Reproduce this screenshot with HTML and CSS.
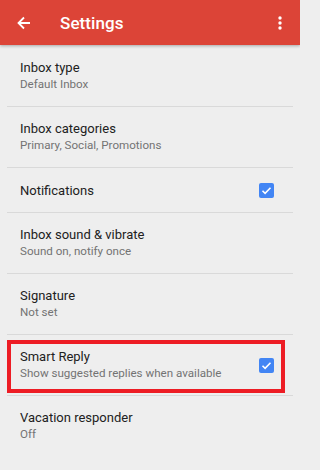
FILE: index.html
```html
<!DOCTYPE html>
<html>
<head>
<meta charset="utf-8">
<link rel="stylesheet" href="styles.css">
</head>
<body>
<header class="appbar">
  <svg class="back" width="16" height="16" viewBox="0 0 16 16"><path d="M14 8H3M8 2.5L2.5 8 8 13.5" fill="none" stroke="#fff" stroke-width="1.8"/></svg>
  <div class="title">Settings</div>
  <svg class="more" width="6" height="16" viewBox="0 0 6 16"><circle cx="3" cy="3" r="1.7" fill="#fff"/><circle cx="3" cy="8" r="1.7" fill="#fff"/><circle cx="3" cy="13" r="1.7" fill="#fff"/></svg>
</header>
<main class="list">
  <div class="row two">
    <div class="text"><div class="t">Inbox type</div><div class="s">Default Inbox</div></div>
  </div>
  <div class="row two">
    <div class="text"><div class="t">Inbox categories</div><div class="s">Primary, Social, Promotions</div></div>
  </div>
  <div class="row one">
    <div class="text"><div class="t">Notifications</div></div>
    <span class="check"><svg width="15" height="15" viewBox="0 0 15 15"><path d="M3.5 7.8l2.6 2.6 5.4-5.6" fill="none" stroke="#fff" stroke-width="1.6"/></svg></span>
  </div>
  <div class="row two">
    <div class="text"><div class="t">Inbox sound &amp; vibrate</div><div class="s">Sound on, notify once</div></div>
  </div>
  <div class="row two">
    <div class="text"><div class="t">Signature</div><div class="s">Not set</div></div>
  </div>
  <div class="row two highlight">
    <div class="text"><div class="t">Smart Reply</div><div class="s">Show suggested replies when available</div></div>
    <span class="check"><svg width="15" height="15" viewBox="0 0 15 15"><path d="M3.5 7.8l2.6 2.6 5.4-5.6" fill="none" stroke="#fff" stroke-width="1.6"/></svg></span>
    <span class="redbox"></span>
  </div>
  <div class="row two last">
    <div class="text"><div class="t">Vacation responder</div><div class="s">Off</div></div>
  </div>
</main>
</body>
</html>
```
FILE: styles.css
```css
html, body {
  margin: 0;
  padding: 0;
  background: #eeeeee;
  font-family: Roboto, "Noto Sans", sans-serif;
}
body {
  width: 300px;
  height: 470px;
  overflow: hidden;
}
.appbar {
  height: 45px;
  background: #dc4437;
  display: flex;
  align-items: center;
  box-shadow: 0 1px 3px rgba(0,0,0,0.3);
  position: relative;
  z-index: 1;
}
.back {
  margin-left: 16px;
  flex: none;
}
.title {
  margin-left: 28px;
  color: #fff;
  font-size: 17px;
  font-weight: 500;
  flex: 1;
  letter-spacing: 0.1px;
}
.more {
  margin-right: 17px;
  flex: none;
}
.list {
  margin-top: 1px;
  padding: 0 7px;
}
.row {
  display: flex;
  align-items: center;
  padding: 0 19px 0 13px;
  border-bottom: 1px solid #d9d9d9;
  position: relative;
}
.row.two { height: 60px; }
.row.one { height: 44px; }
.row.last { border-bottom: none; }
.text { flex: 1; }
.t {
  font-size: 13px;
  color: #212121;
  line-height: 17px;
}
.s {
  font-size: 11.6px;
  color: #737373;
  line-height: 17px;
}
.check {
  width: 15px;
  height: 15px;
  background: #4285f4;
  border-radius: 2px;
  display: block;
  flex: none;
}
.check svg { display: block; }
.redbox {
  position: absolute;
  left: 0;
  top: 5px;
  width: 278px;
  height: 53px;
  border: 4px solid #ed1c24;
  box-sizing: border-box;
}
```
